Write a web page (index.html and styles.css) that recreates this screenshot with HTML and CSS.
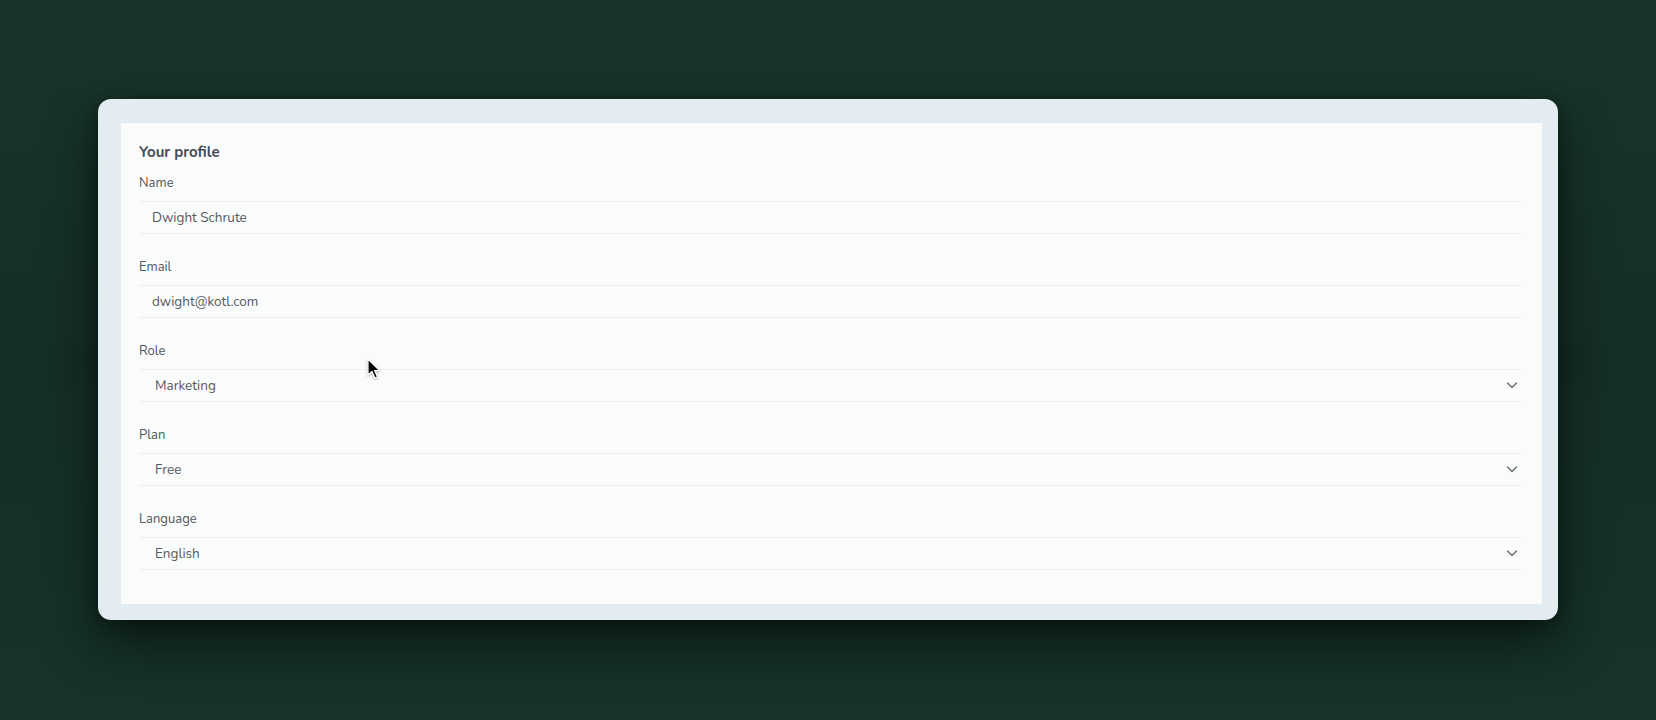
FILE: index.html
```html
<!DOCTYPE html>
<html>
<head>
<meta charset="utf-8">
<link rel="stylesheet" href="styles.css">
</head>
<body>
<div class="stage">
  <div class="card">
    <div class="panel">
      <h1 class="title">Your profile</h1>
      <div class="fields">
        <div class="field">
          <label class="label">Name</label>
          <div class="input">Dwight Schrute</div>
        </div>
        <div class="field">
          <label class="label">Email</label>
          <div class="input">dwight@kotl.com</div>
        </div>
        <div class="field">
          <label class="label">Role</label>
          <div class="input select"><span>Marketing</span><svg class="chev" width="12" height="7" viewBox="0 0 12 7"><path d="M1.5 1l4.5 4.5 4.5-4.5" fill="none" stroke="#6a6d70" stroke-width="1.4" stroke-linecap="round" stroke-linejoin="round"/></svg></div>
        </div>
        <div class="field">
          <label class="label">Plan</label>
          <div class="input select"><span>Free</span><svg class="chev" width="12" height="7" viewBox="0 0 12 7"><path d="M1.5 1l4.5 4.5 4.5-4.5" fill="none" stroke="#6a6d70" stroke-width="1.4" stroke-linecap="round" stroke-linejoin="round"/></svg></div>
        </div>
        <div class="field">
          <label class="label">Language</label>
          <div class="input select"><span>English</span><svg class="chev" width="12" height="7" viewBox="0 0 12 7"><path d="M1.5 1l4.5 4.5 4.5-4.5" fill="none" stroke="#6a6d70" stroke-width="1.4" stroke-linecap="round" stroke-linejoin="round"/></svg></div>
        </div>
      </div>
    </div>
  </div>
  <svg class="cursor" width="14" height="22" viewBox="0 0 14 22"><path d="M1 1 L1 17 L5 13.5 L8 20 L10.5 19 L7.6 12.6 L12.5 12.5 Z" fill="#000" stroke="#fff" stroke-width="1.2" stroke-linejoin="round"/></svg>
</div>
</body>
</html>
```

FILE: styles.css
```css
* { box-sizing: border-box; }
html, body {
  margin: 0;
  padding: 0;
  width: 1656px;
  height: 720px;
  overflow: hidden;
}
body {
  font-family: "Nunito", Lato, "Open Sans", sans-serif;
  background: linear-gradient(180deg, #19352b 0%, #152e27 50%, #17332a 100%);
}
.stage {
  position: relative;
  width: 1656px;
  height: 720px;
  padding: 99px 0 0 98px;
}
.card {
  width: 1460px;
  height: 521px;
  background: #e3edf1;
  border-radius: 13px;
  padding: 24px 16px 16px 23px;
  box-shadow: 0 22px 50px rgba(5, 15, 12, 0.75), 0 4px 14px rgba(0, 0, 0, 0.35);
}
.panel {
  width: 1421px;
  height: 481px;
  background: #fafbfb;
  padding: 19px 20px 0 18px;
}
.title {
  margin: 0;
  font-size: 15px;
  line-height: 20px;
  font-weight: 700;
  color: #454b52;
}
.fields {
  display: flex;
  flex-direction: column;
  gap: 24px;
  margin-top: 12px;
}
.field {
  display: flex;
  flex-direction: column;
}
.label {
  font-size: 13px;
  line-height: 18px;
  color: #51565c;
  margin-bottom: 9px;
}
.input {
  height: 33px;
  border-top: 1px solid #eceeef;
  border-bottom: 1px solid #eceeef;
  display: flex;
  align-items: center;
  padding-left: 13px;
  font-size: 13.5px;
  color: #55595e;
}
.select {
  padding-left: 16px;
  padding-right: 4px;
  justify-content: space-between;
}
.cursor {
  position: absolute;
  left: 367px;
  top: 358px;
  filter: drop-shadow(0 1px 1px rgba(0,0,0,0.3));
}
```
